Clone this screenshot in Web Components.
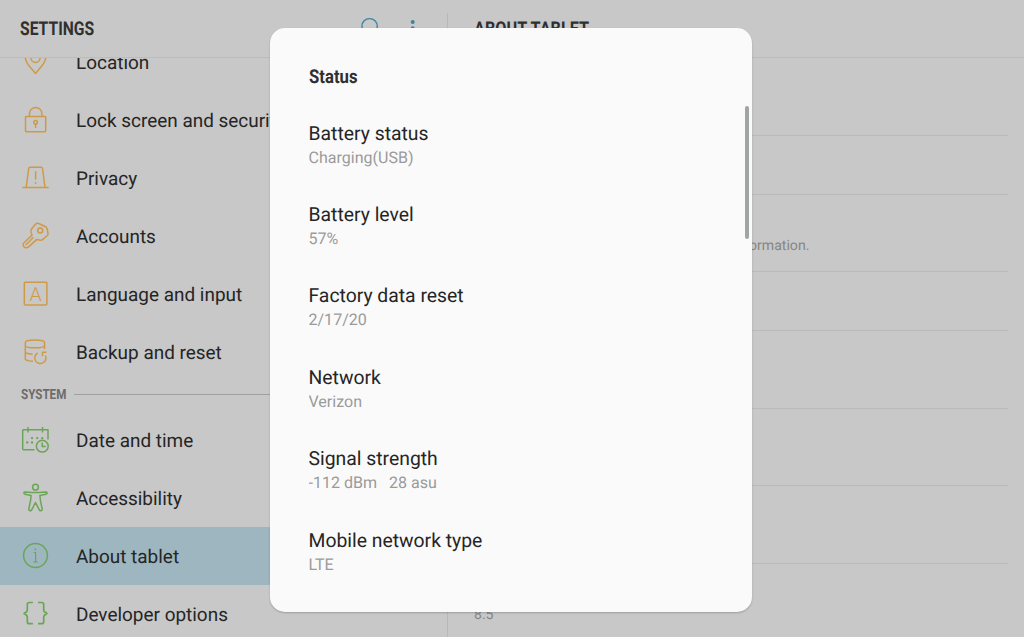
<!DOCTYPE html>
<html lang="en">
<head>
<meta charset="utf-8">
<title>Settings</title>
<style>
html, body { margin: 0; height: 100%; overflow: hidden; }
body { font-family: Roboto, "Liberation Sans", sans-serif; color: #252525; background: #c8c8c8; text-rendering: geometricPrecision; }
</style>
</head>
<body>
<settings-screen></settings-screen>
<script>
const ICONS = {
  location: '<path d="M15.5 27.5C11 21.5 5.3 17.6 5.3 11.4a10.2 10.2 0 0 1 20.4 0C25.700 17.600 20 21.500 15.500 27.500Z"/><circle cx="15.500" cy="11.800" r="4.600"/>',
  lock: '<rect x="5.500" y="12.500" width="20.200" height="15.200" rx=".6"/><path d="M9.500 12.500V9.700a6.200 6.200 0 0 1 12.400 0v2.800M15.600 20v4"/><circle cx="15.600" cy="18.300" r="1.800"/>',
  privacy: '<path d="M2.300 25.500H28.700M6.200 25.500L8.700 6.300Q8.900 5.200 10 5.200H21.200Q22.300 5.200 22.500 6.300L25 25.500M15.600 9.200V17.500"/><circle cx="15.600" cy="21" r=".7" fill="currentColor" stroke-width=".6"/>',
  key: '<path d="M3.300 23.500L12 15.100Q10.600 12 11 9.800L15.600 4Q17.300 2.600 19.300 3.700L25.500 6.700Q26.900 7.500 27.200 9L28 13.500Q28.100 14.700 27.300 15.500L22.500 19.600Q21.700 20.300 20.500 20.200L16.500 19.600L8.700 26.900Q7.200 28.200 5 27.600L3.700 26.500Q2.700 25 3.300 23.500ZM5.600 25.200L13.500 17.300"/><circle cx="20.200" cy="10.400" r="2.500"/>',
  language: '<rect x="4.300" y="4.300" width="22.600" height="22.600" rx="1"/><text x="15.600" y="22.600" text-anchor="middle" font-size="19.500" font-weight="300" fill="currentColor" stroke="none">A</text>',
  backup: '<path d="M5.300 6.600C5.300 3.200 24.500 3.200 24.500 6.600V9.500C24.500 12.600 5.300 12.600 5.300 9.500ZM5.300 9.500V23.500Q7 25 13 25.300M5.300 16.700Q8 18.200 12.600 18.300M24.500 9.500V13M17.700 17a5.600 5.600 0 1 0 7.700 2.500M22.500 20.200V16.200H26.500"/>',
  date: '<path d="M2.700 5.700H28V15.500M2.700 5.700V24.800Q2.700 25.700 3.600 25.700H14.500M8 2.900V8.500M22.500 2.900V8.500"/><path d="M12 14.100h.1M17.200 14.100h.1M22.200 14.100h.1M7.200 18.500h.1M12 18.500h.1" stroke-width="2.300" stroke-linecap="round"/><circle cx="22.300" cy="22.200" r="5.900"/><path d="M22.200 18.400v4h3.500"/>',
  accessibility: '<circle cx="15.500" cy="5.200" r="2.900"/><path d="M5 9.900L12 10.400H19L26 9.900C27.500 10 27.500 12 26 12.300L19.900 13.600L20.500 19L22.200 26.800C22.400 28.800 20 29.500 19.200 27.600L15.500 20.500L11.800 27.600C11 29.500 8.600 28.800 8.800 26.800L10.500 19L11.100 13.600L5 12.300C3.500 12 3.500 10 5 9.900Z"/>',
  about: '<circle cx="15.500" cy="15.500" r="11.900"/><path d="M13.700 12.500H15.600V22M13.300 22H17.900" stroke-width="1.200"/><circle cx="15.400" cy="9.300" r=".6" fill="currentColor" stroke-width=".6"/>',
  developer: '<path d="M12.900 4.500H9.300Q7.300 4.500 7.300 6.500V12.100Q7.300 13 6.600 13.700L4.100 15.500L6.600 17.300Q7.300 18 7.300 18.900V23.700Q7.300 25.700 9.300 25.700H12.900M18 4.500H21.700Q23.700 4.500 23.700 6.500V12.100Q23.700 13 24.400 13.700L26.900 15.500L24.400 17.300Q23.700 18 23.700 18.900V23.700Q23.700 25.700 21.700 25.700H18" stroke-width="1.700"/>'
};

function define(name, html, setup) {
  const template = document.createElement('template');
  template.innerHTML = html;
  customElements.define(name, class extends HTMLElement {
    constructor() {
      super();
      this.attachShadow({ mode: 'open' }).append(template.content.cloneNode(true));
    }
    connectedCallback() { if (setup) setup(this, this.shadowRoot); }
  });
}

define('line-icon', `
<style>
:host { display: block; flex: none; width: 32px; height: 32px; }
svg { display: block; fill: none; stroke: currentColor; stroke-width: 1.5; stroke-linejoin: round; }
</style><svg width="32" height="32" viewBox="0 0 32 32"></svg>`,
(el, root) => { root.querySelector('svg').innerHTML = ICONS[el.getAttribute('name')] || ''; });

// Bold heading, condensed horizontally by --squeeze.
define('condensed-title', `
<style>
:host { display: block; font-weight: 700; white-space: nowrap; }
span { display: inline-block; transform-origin: 0 50%; transform: scaleX(var(--squeeze, .88)); }
</style><span><slot></slot></span>`);

define('menu-item', `
<style>
:host { display: flex; align-items: center; box-sizing: border-box; height: 58px; flex: none; padding-left: 20px; gap: 24px; --tone: #cf9a48; }
:host([tone=green]) { --tone: #6ba557; }
:host([selected]) { background: #9db6c0; }
line-icon { color: var(--tone); margin-top: -1px; }
span { font-size: 18.95px; line-height: 24px; padding-top: 2px; white-space: nowrap; }
</style><span><slot></slot></span>`,
(el, root) => {
  const icon = document.createElement('line-icon');
  icon.setAttribute('name', el.getAttribute('icon'));
  root.querySelector('span').before(icon);
});

define('menu-section', `
<style>
:host { display: flex; align-items: center; height: 30px; flex: none; padding-left: 20.5px; }
condensed-title { width: 53px; font-size: 14px; line-height: 18px; color: #6c6c6c; --squeeze: .83; margin-top: -2px; }
i { flex: 1; height: 1px; background: #a0a0a0; margin-top: -3px; }
</style><condensed-title><slot></slot></condensed-title><i></i>`);

define('app-bar', `
<style>
:host { display: flex; box-sizing: border-box; height: 58px; flex: none; align-items: center; }
.left { display: flex; align-items: center; width: 447px; box-sizing: border-box; padding-left: 20px; }
condensed-title { font-size: 19px; line-height: 24px; color: #303030; }
.left condensed-title { width: 338px; --squeeze: .825; }
.sep { width: 1px; height: 45px; align-self: end; background: #b8b8b8; }
.right { padding-left: 26px; --squeeze: .855; }
svg { display: block; fill: none; stroke: #3d84a0; }
</style>
<div class="left"><condensed-title>SETTINGS</condensed-title>
<svg width="64" height="32" viewBox="0 0 64 32"><circle cx="11.600" cy="13.300" r="7.700" stroke-width="1.400"/><path d="M17 19l6 6" stroke-width="1.400"/><g fill="#3d84a0" stroke="none"><circle cx="54.700" cy="9" r="2"/><circle cx="54.700" cy="15.300" r="2"/><circle cx="54.700" cy="21.600" r="2"/></g></svg></div>
<i class="sep"></i><div class="right"><condensed-title>ABOUT TABLET</condensed-title></div>`);

define('detail-row', `
<style>
:host { display: flex; flex-direction: column; justify-content: flex-end; box-sizing: border-box; height: 77.6px; flex: none; margin-right: 16px; border-bottom: 1px solid #bababa; padding: 0 0 16px 26px; font-size: 14.08px; line-height: 18px; color: #858585; white-space: nowrap; }
:host([short]) { height: 58.700px; }
</style><slot></slot>`);

define('status-item', `
<style>
:host { display: block; height: 81.400px; box-sizing: border-box; flex: none; }
.t { font-size: 19.35px; line-height: 24px; color: #252525; }
.v { font-size: 16.05px; line-height: 20px; color: #9a9a9a; padding-top: 2px; white-space: pre; }
</style><div class="t"><slot name="title"></slot></div><div class="v"><slot></slot></div>`);

define('status-dialog', `
<style>
:host { position: absolute; left: 270px; top: 28px; width: 482px; height: 584px; box-sizing: border-box; border-radius: 15px; background: #fafafa; overflow: hidden; box-shadow: 0 1px 2px rgba(0,0,0,.22); padding: 37px 3px 0 38.500px; display: flex; flex-direction: column; }
condensed-title { font-size: 19px; line-height: 24px; color: #303030; flex: none; }
.body { flex: 1; min-height: 0; display: flex; justify-content: space-between; overflow: hidden; padding-top: 17px; }
.list { display: flex; flex-direction: column; padding-top: 15.600px; }
.bar { width: 4px; height: 133px; border-radius: 2px; background: #a1a4a5; margin-top: -.5px; }
</style>
<condensed-title>Status</condensed-title>
<div class="body"><div class="list"><slot></slot></div><i class="bar"></i></div>`);

define('settings-screen', `
<style>
:host { position: relative; display: flex; flex-direction: column; width: 1024px; height: 637px; overflow: hidden; background: #c8c8c8; }
.panes { display: flex; flex: 1; min-height: 0; overflow: hidden; border-top: 1px solid #bcbcbc; margin-top: -1px; }
nav { width: 447px; display: flex; flex-direction: column; flex: none; }
menu-item:first-child { margin-top: -25px; }
main { flex: 1; border-left: 1px solid #b8b8b8; display: flex; flex-direction: column; padding-top: .5px; }
</style>
<app-bar></app-bar>
<div class="panes">
<nav>
<menu-item icon="location">Location</menu-item>
<menu-item icon="lock">Lock screen and security</menu-item>
<menu-item icon="privacy">Privacy</menu-item>
<menu-item icon="key">Accounts</menu-item>
<menu-item icon="language">Language and input</menu-item>
<menu-item icon="backup">Backup and reset</menu-item>
<menu-section>SYSTEM</menu-section>
<menu-item icon="date" tone="green">Date and time</menu-item>
<menu-item icon="accessibility" tone="green">Accessibility</menu-item>
<menu-item icon="about" tone="green" selected>About tablet</menu-item>
<menu-item icon="developer" tone="green">Developer options</menu-item>
</nav>
<main>
<detail-row></detail-row>
<detail-row short></detail-row>
<detail-row>View the SIM card status, IMEI, and other information.</detail-row>
<detail-row short></detail-row>
<detail-row></detail-row>
<detail-row></detail-row>
<detail-row></detail-row>
<detail-row>8.5</detail-row>
</main>
</div>
<status-dialog>
<status-item><span slot="title">Battery status</span>Charging(USB)</status-item>
<status-item><span slot="title">Battery level</span>57%</status-item>
<status-item><span slot="title">Factory data reset</span>2/17/20</status-item>
<status-item><span slot="title">Network</span>Verizon</status-item>
<status-item><span slot="title">Signal strength</span>-112 dBm   28 asu</status-item>
<status-item><span slot="title">Mobile network type</span>LTE</status-item>
</status-dialog>`);
</script>
</body>
</html>
